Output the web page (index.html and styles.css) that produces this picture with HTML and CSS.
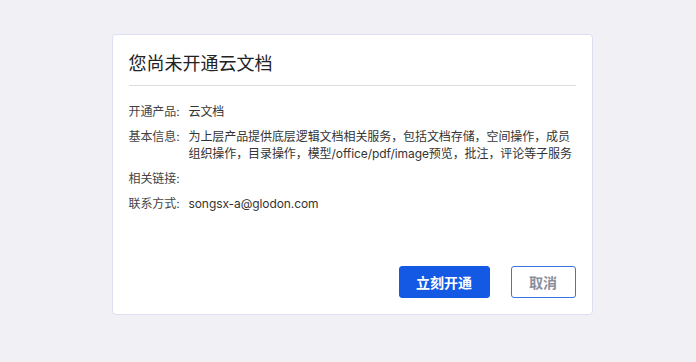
FILE: index.html
```html
<!DOCTYPE html>
<html>
<head>
  <meta charset="utf-8">
  <title>云文档</title>
  <link rel="stylesheet" href="styles.css">
</head>
<body>
  <div class="page">
    <div class="dialog">
      <div class="dialog-title">您尚未开通云文档</div>
      <div class="info-list">
        <div class="info-row">
          <span class="info-label">开通产品:</span>
          <span class="info-value">云文档</span>
        </div>
        <div class="info-row">
          <span class="info-label">基本信息:</span>
          <span class="info-value">为上层产品提供底层逻辑文档相关服务，包括文档存储，空间操作，成员组织操作，目录操作，模型/office/pdf/image预览，批注，评论等子服务</span>
        </div>
        <div class="info-row">
          <span class="info-label">相关链接:</span>
          <span class="info-value"></span>
        </div>
        <div class="info-row">
          <span class="info-label">联系方式:</span>
          <span class="info-value">songsx-a@glodon.com</span>
        </div>
      </div>
      <div class="dialog-footer">
        <button class="btn btn-primary">立刻开通</button>
        <button class="btn btn-cancel">取消</button>
      </div>
    </div>
  </div>
</body>
</html>
```

FILE: styles.css
```css
* {
    box-sizing: border-box;
}
body {
    margin: 0;
    background: #f0f0f5;
    font-family: "Inter", "Noto Sans CJK SC", sans-serif;
    color: #333;
}
.page {
    display: flex;
    justify-content: center;
    padding-top: 34px;
    padding-left: 8px;
}
.dialog {
    width: 481px;
    height: 281px;
    background: #fff;
    border: 1px solid #dcdff2;
    border-radius: 4px;
    padding: 14px 16px 16px 16px;
    display: flex;
    flex-direction: column;
}
.dialog-title {
    font-size: 18px;
    line-height: 30px;
    padding-bottom: 6px;
    border-bottom: 1px solid #dcdde3;
    color: #222;
}
.info-list {
    padding-top: 17px;
    font-size: 12px;
    line-height: 17px;
    letter-spacing: -0.08px;
    display: flex;
    flex-direction: column;
    gap: 8px;
}
.info-row {
    display: flex;
    min-height: 17px;
}
.info-label {
    flex: 0 0 60px;
    color: #444;
}
.info-value {
    flex: 1;
    color: #333;
}
.dialog-footer {
    margin-top: auto;
    display: flex;
    justify-content: flex-end;
    gap: 21px;
}
.btn {
    height: 32px;
    border-radius: 3px;
    font-family: "Inter", "Noto Sans CJK SC", sans-serif;
    font-size: 14px;
    font-weight: bold;
    cursor: pointer;
}
.btn-primary {
    width: 91px;
    background: #1459e3;
    border: 1px solid #1459e3;
    color: #fff;
}
.btn-cancel {
    width: 65px;
    background: #fff;
    border: 1px solid #3a73e6;
    color: #8a8e9c;
}
```
